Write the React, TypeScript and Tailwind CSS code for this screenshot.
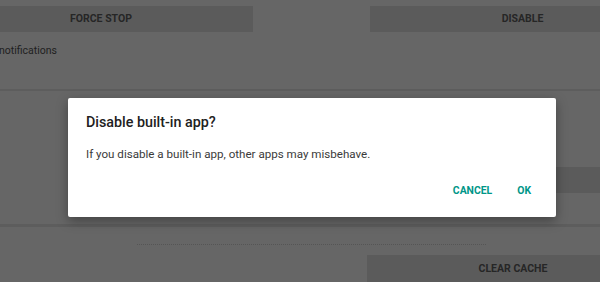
export default function App() {
  return (
    <div className="relative w-[600px] h-[282px] overflow-hidden bg-[#666666] font-['Roboto',sans-serif]">
      {/* dimmed settings page behind the dialog */}
      <div className="flex flex-col">
        <div className="flex mt-[6px] h-[26px]">
          <div className="shrink-0 -ml-[51px] w-[304px] h-full bg-[#5b5b5b] flex items-center justify-center text-[10.5px] font-bold text-[#262626]">
            FORCE STOP
          </div>
          <div className="shrink-0 ml-[117px] w-[305px] h-full bg-[#5b5b5b] flex items-center justify-center text-[10.5px] font-bold text-[#262626]">
            DISABLE
          </div>
        </div>
        <div className="mt-[12px] -ml-[1px] text-[10.5px] leading-[14px] text-[#1f1f1f]">notifications</div>
        <div className="mt-[31px] h-[2px] bg-[#5d5d5d]" />
        <div className="mt-[76px] flex h-[26px]">
          <div className="ml-[367px] flex-1 bg-[#5b5b5b]" />
        </div>
        <div className="mt-[31px] h-[3px] bg-[#5d5d5d]" />
        <div className="mt-[17px] ml-[137px] w-[349px] border-t border-dotted border-[#555555]" />
        <div className="mt-[10px] flex h-[27px]">
          <div className="shrink-0 ml-[367px] w-[292px] bg-[#5b5b5b] flex items-center justify-center text-[10.5px] font-bold text-[#262626]">
            CLEAR CACHE
          </div>
        </div>
      </div>

      {/* dialog */}
      <div className="absolute left-[68px] top-[98px] w-[488px] h-[119px] bg-white rounded-[2px] shadow-[0_4px_12px_rgba(0,0,0,0.35)] flex flex-col px-[18px]">
        <div className="mt-[15px] text-[14.3px] leading-[18px] font-medium text-[#212121]">Disable built-in app?</div>
        <div className="mt-[15px] text-[11.6px] leading-[16px] text-[#3a3a3a]">
          If you disable a built-in app, other apps may misbehave.
        </div>
        <div className="mt-auto mb-[19px] flex justify-end items-center gap-[25px] pr-[7px] text-[10.4px] leading-[14px] font-bold text-[#009688]">
          <span>CANCEL</span>
          <span>OK</span>
        </div>
      </div>
    </div>
  )
}
